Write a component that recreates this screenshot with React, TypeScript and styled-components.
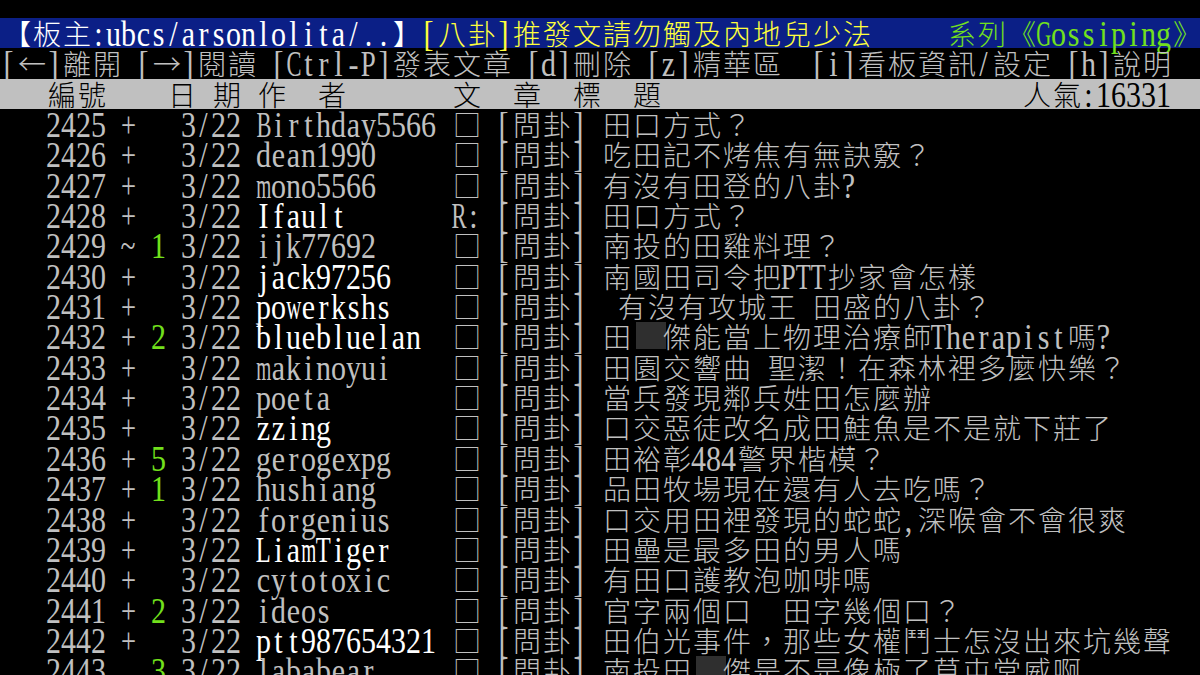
import React from 'react';
import styled, { createGlobalStyle } from 'styled-components';

const GlobalStyle = createGlobalStyle`
  html, body {
    margin: 0;
    padding: 0;
    background: #000000;
  }
  body {
    width: 1200px;
    height: 675px;
    overflow: hidden;
  }
`

const GREY = '#c0c0c0';
const WHITE = '#ffffff';
const YELLOW = '#ffff3c';
const GREEN = '#72e01c';
const NAVY = '#0b1f86';

const Screen = styled.div`
    width: 1200px;
    height: 675px;
    padding-top: 18px;
    box-sizing: border-box;
    background-color: #000000;
    overflow: hidden;
`

const Line = styled.div<{ $bg?: string }>`
    display: flex;
    height: 30.35px;
    width: 1200px;
    background-color: ${p => p.$bg || 'transparent'};
`

const Cell = styled.span<{ $wide?: boolean; $fg: string }>`
    flex: none;
    display: flex;
    justify-content: center;
    align-items: flex-start;
    width: ${p => (p.$wide ? 30 : 15)}px;
    height: 100%;
    color: ${p => p.$fg};
    position: relative;
`

const Half = styled.span`
    display: inline-block;
    font-family: 'Liberation Serif', serif;
    font-size: 30px;
    line-height: 30px;
    height: 30px;
    white-space: pre;
    transform-origin: 50% 25px;
`

const Full = styled.span`
    display: inline-block;
    font-family: 'Noto Sans CJK TC', 'Noto Sans CJK SC', sans-serif;
    font-weight: 300;
    font-size: 28px;
    line-height: 30px;
    height: 30px;
    white-space: pre;
    transform: translateX(2px);
`

// censored character in a title
const Mask = styled.span`
    position: absolute;
    left: 6px;
    top: 1px;
    width: 30px;
    height: 27px;
    background-color: #2f2f2f;
`

const ctx = typeof document !== 'undefined' ? document.createElement('canvas').getContext('2d') : null;
const widths: Record<string, number> = {};

const squeeze = (ch: string) => {
    if (widths[ch] === undefined) {
        let w = 15;
        if (ctx) {
            ctx.font = "30px 'Liberation Serif'";
            w = ctx.measureText(ch).width;
        }
        widths[ch] = w;
    }
    return Math.min(1, 15 / widths[ch]);
};

const isWide = (ch: string) => ch.charCodeAt(0) >= 0x2190;

type Seg = [string, string];

const Text = ({ segs }: { segs: Seg[] }) => (
    <>
        {segs.flatMap(([text, fg], si) =>
            Array.from(text).map((ch, i) => {
                const key = `${si}-${i}`;
                if (ch === '█') return <Cell key={key} $wide $fg={fg}><Mask /></Cell>;
                if (ch === ' ') return <Cell key={key} $fg={fg} />;
                if (isWide(ch)) return <Cell key={key} $wide $fg={fg}><Full>{ch}</Full></Cell>;
                return (
                    <Cell key={key} $fg={fg}>
                        <Half style={{ transform: `translate(1px, 3px) scale(${squeeze(ch)}, 1.18)` }}>{ch}</Half>
                    </Cell>
                );
            })
        )}
    </>
);

type Post = {
    num: number;
    mark: string;
    push: string;
    author: string;
    bright?: boolean;
    box: string;
    title: string;
};

const posts: Post[] = [
    { num: 2425, mark: '+', push: '', author: 'Birthday5566', box: '□', title: '田口方式？' },
    { num: 2426, mark: '+', push: '', author: 'dean1990', box: '□', title: '吃田記不烤焦有無訣竅？' },
    { num: 2427, mark: '+', push: '', author: 'mono5566', box: '□', title: '有沒有田登的八卦?' },
    { num: 2428, mark: '+', push: '', author: 'Ifault', bright: true, box: 'R:', title: '田口方式？' },
    { num: 2429, mark: '~', push: '1', author: 'ijk77692', box: '□', title: '南投的田雞料理？' },
    { num: 2430, mark: '+', push: '', author: 'jack97256', bright: true, box: '□', title: '南國田司令把PTT抄家會怎樣' },
    { num: 2431, mark: '+', push: '', author: 'powerkshs', bright: true, box: '□', title: ' 有沒有攻城王 田盛的八卦？' },
    { num: 2432, mark: '+', push: '2', author: 'bluebluelan', bright: true, box: '□', title: '田█傑能當上物理治療師Therapist嗎?' },
    { num: 2433, mark: '+', push: '', author: 'makinoyui', box: '□', title: '田園交響曲 聖潔！在森林裡多麼快樂？' },
    { num: 2434, mark: '+', push: '', author: 'poeta', box: '□', title: '當兵發現鄰兵姓田怎麼辦' },
    { num: 2435, mark: '+', push: '', author: 'zzing', bright: true, box: '□', title: '口交惡徒改名成田鮭魚是不是就下莊了' },
    { num: 2436, mark: '+', push: '5', author: 'gerogexpg', box: '□', title: '田裕彰484警界楷模？' },
    { num: 2437, mark: '+', push: '1', author: 'hushiang', box: '□', title: '品田牧場現在還有人去吃嗎？' },
    { num: 2438, mark: '+', push: '', author: 'forgenius', box: '□', title: '口交用田裡發現的蛇蛇,深喉會不會很爽' },
    { num: 2439, mark: '+', push: '', author: 'LiamTiger', bright: true, box: '□', title: '田壘是最多田的男人嗎' },
    { num: 2440, mark: '+', push: '', author: 'cytotoxic', box: '□', title: '有田口護教泡咖啡嗎' },
    { num: 2441, mark: '+', push: '2', author: 'ideos', box: '□', title: '官字兩個口  田字幾個口？' },
    { num: 2442, mark: '+', push: '', author: 'ptt987654321', bright: true, box: '□', title: '田伯光事件，那些女權鬥士怎沒出來坑幾聲' },
    { num: 2443, mark: ' ', push: '3', author: 'lababear', box: '□', title: '南投田█傑是不是像極了草屯堂威啊' },
];

const postSegs = (p: Post): Seg[] => [
    [`   ${p.num} ${p.mark} `, GREY],
    [p.push.padEnd(2, ' '), GREEN],
    ['3/22 ', GREY],
    [p.author.padEnd(12, ' '), p.bright ? WHITE : GREY],
    [` ${p.box} [問卦] `, GREY],
    [p.title, GREY],
];

const App = () => {
    return (
        <Screen>
            <GlobalStyle />
            <Line $bg={NAVY}>
                <Text segs={[
                    ['【板主:ubcs/arsonlolita/..】', WHITE],
                    ['[八卦]推發文請勿觸及內地兒少法', YELLOW],
                    ['     ', GREY],
                    ['系列《Gossiping》', GREEN],
                ]} />
            </Line>
            <Line>
                <Text segs={[['[←]離開 [→]閱讀 [Ctrl-P]發表文章 [d]刪除 [z]精華區  [i]看板資訊/設定 [h]說明', GREY]]} />
            </Line>
            <Line $bg={GREY}>
                <Text segs={[['   編號    日 期 作  者       文  章  標  題                        人氣:16331', '#000000']]} />
            </Line>
            {posts.map(p => (
                <Line key={p.num}>
                    <Text segs={postSegs(p)} />
                </Line>
            ))}
        </Screen>
    )
};

export default App
